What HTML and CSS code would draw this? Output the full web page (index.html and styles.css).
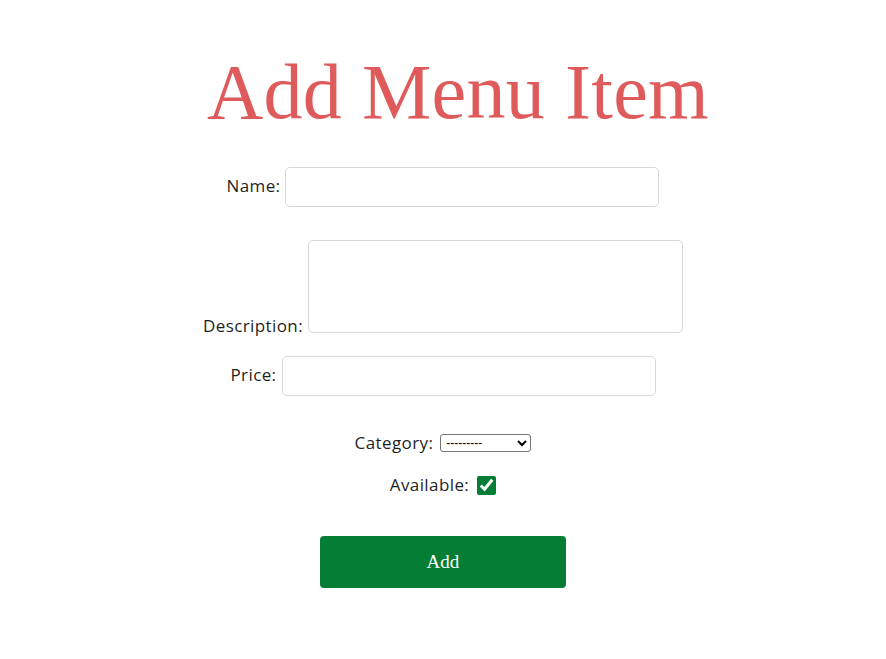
FILE: index.html
```html
<!DOCTYPE html>
<html lang="en">
<head>
<meta charset="utf-8">
<title>Add Menu Item</title>
<link rel="stylesheet" href="styles.css">
</head>
<body>
<main class="page">
  <h1 class="title">Add Menu Item</h1>
  <form class="form">
    <div class="row row-name">
      <label class="label" for="name">Name:</label>
      <input class="field" id="name" type="text">
    </div>
    <div class="row row-desc">
      <label class="label label-bottom" for="desc">Description:</label>
      <textarea class="field area" id="desc"></textarea>
    </div>
    <div class="row row-price">
      <label class="label" for="price">Price:</label>
      <input class="field" id="price" type="text">
    </div>
    <div class="row row-cat">
      <label class="label" for="cat">Category:</label>
      <select class="select" id="cat">
        <option>---------</option>
      </select>
    </div>
    <div class="row row-avail">
      <label class="label" for="avail">Available:</label>
      <input class="check" id="avail" type="checkbox" checked>
    </div>
    <button class="btn" type="button">Add</button>
  </form>
</main>
</body>
</html>
```

FILE: styles.css
```css
* { box-sizing: border-box; }
html, body { margin: 0; padding: 0; background: #ffffff; }
body {
  font-family: "Open Sans", "Noto Sans", sans-serif;
  color: #1f1f1f;
}
.page {
  display: flex;
  flex-direction: column;
  align-items: center;
}
.title {
  margin: 52px 0 0 30px;
  font-family: "Liberation Serif", "DejaVu Serif", serif;
  font-weight: 400;
  font-size: 78px;
  line-height: 79px;
  color: #df5b5b;
  letter-spacing: 0.3px;
}
.form {
  display: flex;
  flex-direction: column;
  align-items: center;
  margin-top: 36px;
}
.row {
  display: flex;
  justify-content: center;
  align-items: center;
  gap: 5px;
}
.label {
  font-size: 17px;
  line-height: 20px;
  letter-spacing: 0.4px;
}
.row-name .label { margin-top: -3px; }
.row-price .label { margin-top: -3px; }
.row-desc { margin-top: 33px; align-items: flex-end; }
.label-bottom { margin-bottom: -3px; }
.row-price { margin-top: 23px; }
.row-cat { margin-top: 37px; height: 20px; }
.row-avail { margin-top: 22px; height: 20px; gap: 8px; }
.field {
  width: 374px;
  height: 40px;
  border: 1px solid #d8d8d8;
  border-radius: 5px;
  background: #fff;
  font: inherit;
  padding: 6px 10px;
  margin: 0;
}
.area {
  width: 375px;
  height: 93px;
  resize: none;
}
.select {
  width: 91px;
  height: 18px;
  font-family: "Liberation Sans", Arial, sans-serif;
  font-size: 12px;
  border: 1px solid #767676;
  border-radius: 3px;
  background: #fff;
  color: #000;
  padding: 0 0 0 1px;
  margin: 0 0 0 2px;
}
.check {
  width: 19px;
  height: 19px;
  margin: 0;
  accent-color: #067d34;
}
.btn {
  margin-top: 41px;
  width: 246px;
  height: 52px;
  border: none;
  border-radius: 4px;
  background: #067d34;
  color: #ffffff;
  font-family: "Liberation Serif", "DejaVu Serif", serif;
  font-size: 19px;
  cursor: pointer;
}
```
